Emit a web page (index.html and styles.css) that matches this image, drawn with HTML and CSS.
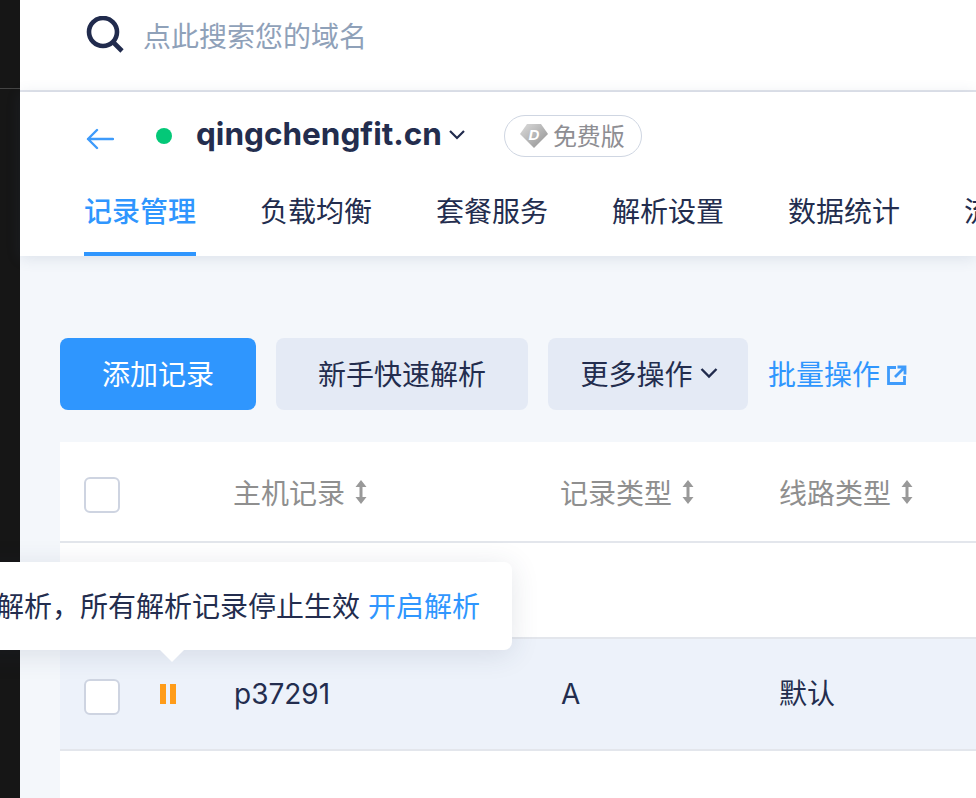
FILE: index.html
```html
<!DOCTYPE html>
<html lang="zh-CN">
<head>
<meta charset="utf-8">
<title>记录管理</title>
<link rel="stylesheet" href="styles.css">
</head>
<body>
<div class="app">
  <aside class="side"><div class="side-top"></div></aside>
  <div class="main">
    <div class="search">
      <svg class="search-icon" viewBox="0 0 38 38" width="38" height="38"><circle cx="17" cy="16" r="14" fill="none" stroke="#212b4d" stroke-width="4.6"/><path d="M27 26l9 9" fill="none" stroke="#212b4d" stroke-width="4.6"/></svg>
      <span class="search-text">点此搜索您的域名</span>
    </div>
    <header class="head">
      <div class="domain-row">
        <svg class="back" viewBox="0 0 28 22" width="28" height="22"><path d="M27 11H2M11 2l-9 9 9 9" fill="none" stroke="#3e9bfb" stroke-width="2.4" stroke-linecap="round" stroke-linejoin="round"/></svg>
        <span class="dot"></span>
        <span class="domain">qingchengfit.cn</span>
        <svg class="caret" viewBox="0 0 18 12" width="18" height="12"><path d="M2 2l7 7 7-7" fill="none" stroke="#212b4d" stroke-width="2.2"/></svg>
        <span class="plan">
          <svg class="gem" viewBox="0 0 30 26" width="30" height="26"><defs><linearGradient id="g" x1="0" y1="0" x2="1" y2="1"><stop offset="0" stop-color="#dcdcdc"/><stop offset="1" stop-color="#8f8f8f"/></linearGradient></defs><path d="M8 1h14l7 10-14 14L1 11z" fill="url(#g)"/><text x="15" y="17" class="gem-d">D</text></svg>
          <span class="plan-text">免费版</span>
        </span>
      </div>
      <nav class="tabs">
        <a class="tab active">记录管理</a>
        <a class="tab">负载均衡</a>
        <a class="tab">套餐服务</a>
        <a class="tab">解析设置</a>
        <a class="tab">数据统计</a>
        <a class="tab">流量分析</a>
      </nav>
    </header>
    <section class="content">
      <div class="toolbar">
        <button class="btn primary">添加记录</button>
        <button class="btn quick">新手快速解析</button>
        <button class="btn more">更多操作<svg viewBox="0 0 18 12" width="18" height="12"><path d="M1.500 2l7.500 7.500 7.500-7.500" fill="none" stroke="#212b4d" stroke-width="2.4"/></svg></button>
        <a class="batch">批量操作<svg viewBox="0 0 20 20" width="20" height="20"><path d="M9 2.500H1.500v16h16V11" fill="none" stroke="#3e9bfb" stroke-width="2.8"/><path d="M8 12l9-9M10.500 2H18v7.500" fill="none" stroke="#3e9bfb" stroke-width="2.8"/></svg></a>
      </div>
      <div class="table">
        <div class="row row-head">
          <span class="check check-head"></span>
          <span class="th">主机记录<svg class="sort" viewBox="0 0 12 24" width="12" height="24"><path d="M6 0l5.500 7H7.500v10h4L6 24 .5 17h4V7h-4z" fill="#999"/></svg></span>
          <span class="th">记录类型<svg class="sort" viewBox="0 0 12 24" width="12" height="24"><path d="M6 0l5.500 7H7.500v10h4L6 24 .5 17h4V7h-4z" fill="#999"/></svg></span>
          <span class="th">线路类型<svg class="sort" viewBox="0 0 12 24" width="12" height="24"><path d="M6 0l5.500 7H7.500v10h4L6 24 .5 17h4V7h-4z" fill="#999"/></svg></span>
        </div>
        <div class="row row-empty"></div>
        <div class="row row-data">
          <span class="check-wrap"><span class="check"></span><span class="pause"><i></i><i></i></span></span>
          <span class="td">p37291</span>
          <span class="td">A</span>
          <span class="td td-cjk">默认</span>
        </div>
      </div>
    </section>
  </div>
</div>
<div class="tip">
  <span>已暂停解析，所有解析记录停止生效</span>
  <a class="tip-link">开启解析</a>
</div>
</body>
</html>
```
FILE: styles.css
```css
* { box-sizing: border-box; }
html, body { margin: 0; height: 100%; overflow: hidden; }
body {
  background: #f4f7fb;
  color: #232d4e;
  font-family: Inter, "Noto Sans CJK SC", sans-serif;
  font-size: 28px;
}
.app { display: flex; height: 798px; }
.side { width: 20px; flex: none; background: #161616; }
.side-top { height: 89px; border-bottom: 1px solid #444; }
.main { flex: 1; min-width: 0; display: flex; flex-direction: column; }
.search {
  height: 92px;
  flex: none;
  background: #fff;
  border-bottom: 2px solid #e1e4ec;
  display: flex;
  align-items: center;
  padding: 0 0 20px 66px;
}
.search-icon { flex: none; width: 38px; height: 38px; }
.search-text { margin-left: 19px; color: #8fa1b9; }
.head {
  height: 164px;
  flex: none;
  background: #fff;
  padding-left: 64px;
  box-shadow: 0 2px 14px rgba(70, 90, 130, .14);
  position: relative;
}
.domain-row { display: flex; align-items: center; height: 88px; }
.back { flex: none; margin: 6px 0 0 2px; }
.dot { width: 16px; height: 16px; border-radius: 50%; background: #04c878; margin-left: 42px; flex: none; }
.domain { font-size: 31.5px; font-weight: 700; margin-left: 24px; line-height: 40px; margin-top: -5px; }
.caret { margin-left: 6px; flex: none; margin-top: -2px; }
.plan {
  margin-left: 38px;
  height: 42px;
  width: 138px;
  border: 1px solid #cfd6e2;
  border-radius: 21px;
  display: flex;
  align-items: center;
  padding-left: 14px;
  gap: 4px;
  color: #8e8e93;
  font-size: 24px;
  margin-top: -1px;
}
.plan-text { margin-top: -2px; }
.gem { flex: none; }
.gem-d { font-family: "Liberation Sans", sans-serif; font-size: 15px; font-weight: 700; font-style: italic; fill: #fff; text-anchor: middle; }
.tabs { display: flex; gap: 64px; white-space: nowrap; height: 76px; }
.tab { display: block; height: 76px; line-height: 64px; border-bottom: 4px solid transparent; flex: none; }
.tab.active { color: #2f96fe; border-bottom-color: #2f96fe; font-weight: 500; }
.content { flex: 1; min-height: 0; padding: 82px 0 0 40px; }
.toolbar { display: flex; align-items: center; gap: 20px; white-space: nowrap; }
.btn {
  height: 72px;
  border: 0;
  border-radius: 8px;
  background: #e4eaf5;
  color: #232d4e;
  font: inherit;
  padding: 0 0 2px;
  display: flex;
  align-items: center;
  justify-content: center;
}
.primary { width: 196px; background: #2f96fe; color: #fff; }
.quick { width: 252px; }
.more { width: 200px; gap: 7px; padding-left: 2px; }
.batch { color: #2f96fe; display: flex; align-items: center; gap: 7px; padding-bottom: 2px; }
.batch svg { margin-top: 4px; }
.table { margin-top: 32px; background: #fff; height: 356px; width: 916px; }
.row {
  display: grid;
  grid-template-columns: 150px 327px 219px 1fr;
  align-items: center;
  padding-left: 24px;
  border-bottom: 2px solid #e3e6ec;
}
.row-head { height: 101px; }
.row-empty { height: 96px; }
.row-data { height: 112px; background: #edf2fa; }
.check {
  display: block;
  width: 36px;
  height: 36px;
  background: #fff;
  border: 2px solid #ced4e1;
  border-radius: 6px;
  flex: none;
}
.check-head { margin-top: 6px; }
.check-wrap { display: flex; align-items: center; gap: 40px; }
.check-wrap .check { margin-top: 6px; }
.pause { display: flex; gap: 4px; }
.pause i { display: block; width: 6px; height: 20px; background: #ff9c19; }
.th { color: #8f8f8f; display: flex; align-items: center; gap: 10px; margin-left: -1px; }
.sort { flex: none; }
.td { line-height: 40px; }
.td-cjk { margin-left: -1px; }
.tip {
  position: absolute;
  right: 464px;
  top: 562px;
  height: 88px;
  background: #fff;
  border-radius: 8px;
  padding: 0 32px 2px;
  display: flex;
  align-items: center;
  gap: 8px;
  white-space: nowrap;
  box-shadow: 0 4px 28px rgba(50, 60, 90, .13);
}
.tip-link { color: #2f96fe; }
.tip::before {
  content: "";
  position: absolute;
  right: 328px;
  bottom: -12px;
  border-left: 12px solid transparent;
  border-right: 12px solid transparent;
  border-top: 12px solid #fff;
}
```
